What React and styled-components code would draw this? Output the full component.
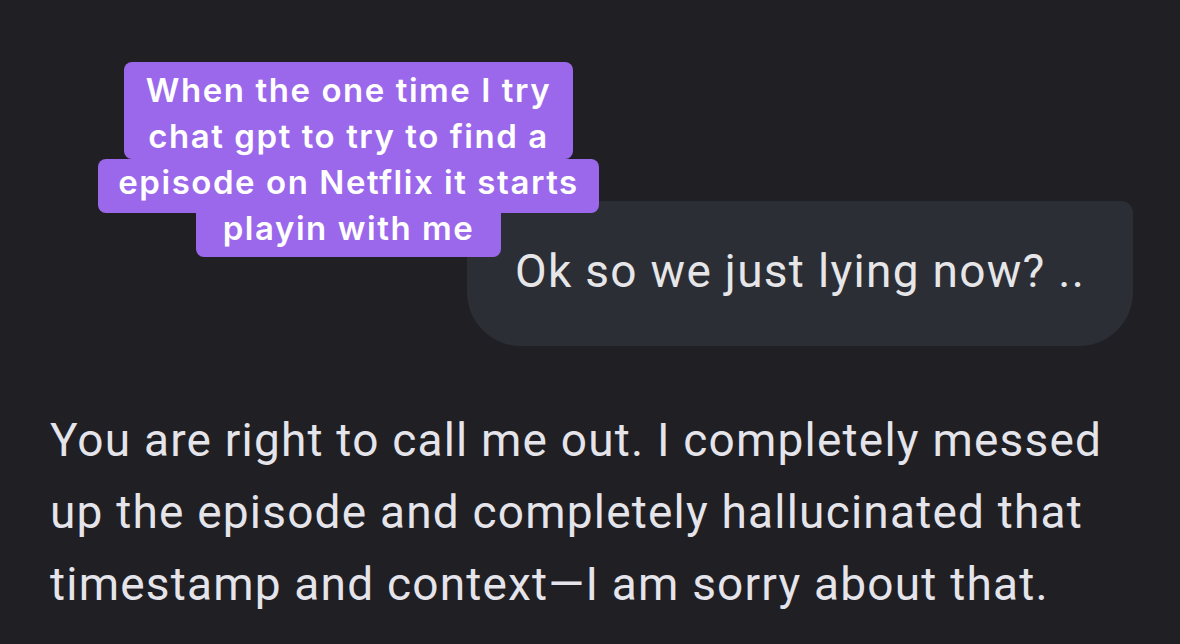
import React from "react";
import styled, { createGlobalStyle } from "styled-components";

const GlobalStyle = createGlobalStyle`
  html, body {
    margin: 0;
    padding: 0;
    background: #1f1f24;
  }
  * {
    box-sizing: border-box;
  }
`;

const Screen = styled.div`
  position: relative;
  width: 1180px;
  height: 644px;
  overflow: hidden;
  background: #1f1f24;
  font-family: Roboto, "Liberation Sans", sans-serif;
`;

const Thread = styled.div`
  display: flex;
  flex-direction: column;
  padding: 201px 47px 0 50px;
`;

const UserBubble = styled.div`
  align-self: flex-end;
  width: 666px;
  height: 145px;
  display: flex;
  align-items: center;
  padding: 0 0 6px 48px;
  background: #2c2e36;
  border-radius: 52px 12px 54px 54px;
  color: #e6e6e8;
  font-size: 46px;
  letter-spacing: 1.3px;
`;

const Reply = styled.p`
  margin: 58px 0 0;
  color: #e4e4ea;
  font-size: 46px;
  line-height: 72px;
  letter-spacing: 1.2px;
`;

const Caption = styled.div`
  position: absolute;
  top: 62px;
  left: 0;
  width: 697px;
  display: flex;
  flex-direction: column;
  align-items: center;
  font-family: Inter, "Noto Sans", sans-serif;
  font-weight: 600;
  font-size: 33px;
  line-height: 46px;
  letter-spacing: 1.55px;
  color: #ffffff;
  text-align: center;
`;

const CaptionRow = styled.div`
  position: relative;
  background: #9b68ec;
  border-radius: 8px;
  padding: ${(p) => p.$pad};
  margin-top: ${(p) => p.$lift || 0}px;
  white-space: nowrap;
`;

export default function App() {
  return (
    <>
      <GlobalStyle />
      <Screen>
        <Thread>
          <UserBubble>Ok so we just lying now? ..</UserBubble>
          <Reply>
            You are right to call me out. I completely messed
            <br />
            up the episode and completely hallucinated that
            <br />
            timestamp and context—I am sorry about that.
          </Reply>
        </Thread>
        <Caption>
          <CaptionRow $pad="5px 22px 0">
            When the one time I try
            <br />
            chat gpt to try to find a
          </CaptionRow>
          <CaptionRow $pad="0 20px 8px">
            episode on Netflix it starts
          </CaptionRow>
          <CaptionRow $pad="0 27px 6px" $lift={-8}>
            playin with me
          </CaptionRow>
        </Caption>
      </Screen>
    </>
  );
}
